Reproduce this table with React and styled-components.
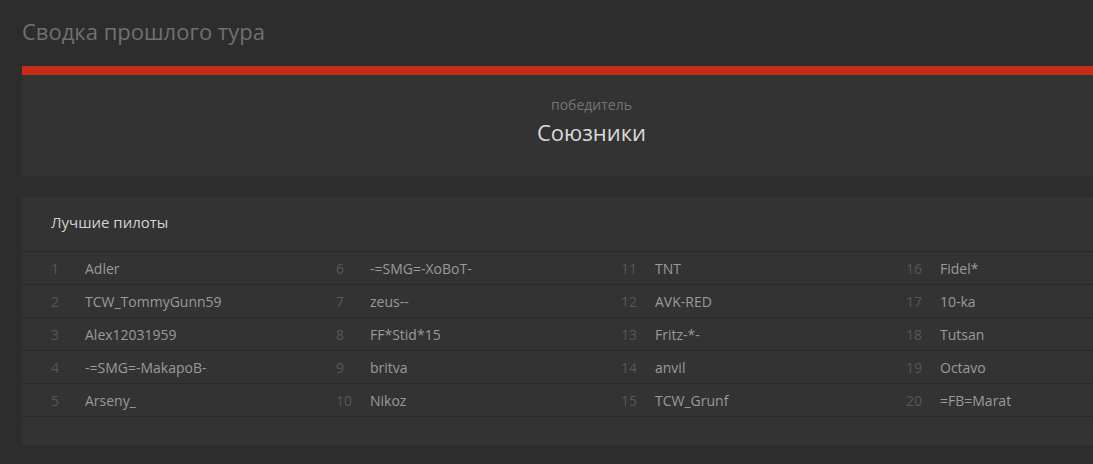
import React from 'react'
import styled, { createGlobalStyle } from 'styled-components'

const GlobalStyle = createGlobalStyle`
  html, body {
    margin: 0;
    padding: 0;
    background: #2d2d2d;
    overflow: hidden;
  }
  body {
    font-family: "Open Sans", "Noto Sans", sans-serif;
  }
`

const Page = styled.div`
  padding: 16px 0 0 22px;
  width: 1139px;
  min-height: 448px;
`

const PageTitle = styled.h1`
  margin: 0 0 20px;
  font-size: 22px;
  line-height: 30px;
  font-weight: 400;
  color: #707070;
`

const WinnerCard = styled.section`
  background: #333333;
  border-top: 9px solid #c52d1a;
  padding: 20px 0 29px;
  text-align: center;
`

const WinnerLabel = styled.div`
  font-size: 14px;
  line-height: 20px;
  color: #747474;
`

const WinnerName = styled.div`
  margin-top: 2px;
  font-size: 22px;
  line-height: 30px;
  color: #dadada;
`

const PilotsCard = styled.section`
  margin-top: 21px;
  background: #333333;
  padding-bottom: 28px;
`

const CardHeader = styled.h2`
  margin: 0;
  padding: 15px 29px 19px;
  font-size: 15px;
  line-height: 20px;
  font-weight: 400;
  color: #d2d2d2;
  border-bottom: 1px solid #2b2b2b;
`

const Row = styled.div`
  display: grid;
  grid-template-columns: repeat(4, 285px);
  padding-left: 29px;
  height: 32px;
  border-bottom: 1px solid #2b2b2b;
`

const Cell = styled.div`
  display: flex;
  padding-top: 1px;
  font-size: 14px;
  line-height: 32px;
`

const Place = styled.span`
  width: 34px;
  color: #575757;
`

const Name = styled.span`
  color: #9a9a9a;
  white-space: nowrap;
`

const pilots = [
  'Adler', 'TCW_TommyGunn59', 'Alex12031959', '-=SMG=-MakapoB-', 'Arseny_',
  '-=SMG=-XoBoT-', 'zeus--', 'FF*Stid*15', 'britva', 'Nikoz',
  'TNT', 'AVK-RED', 'Fritz-*-', 'anvil', 'TCW_Grunf',
  'Fidel*', '10-ka', 'Tutsan', 'Octavo', '=FB=Marat',
]

export default function App() {
  const rows = [0, 1, 2, 3, 4]
  return (
    <>
      <GlobalStyle />
      <Page>
        <PageTitle>Сводка прошлого тура</PageTitle>
        <WinnerCard>
          <WinnerLabel>победитель</WinnerLabel>
          <WinnerName>Союзники</WinnerName>
        </WinnerCard>
        <PilotsCard>
          <CardHeader>Лучшие пилоты</CardHeader>
          {rows.map((r) => (
            <Row key={r}>
              {[0, 1, 2, 3].map((c) => {
                const i = c * 5 + r
                return (
                  <Cell key={c}>
                    <Place>{i + 1}</Place>
                    <Name>{pilots[i]}</Name>
                  </Cell>
                )
              })}
            </Row>
          ))}
        </PilotsCard>
      </Page>
    </>
  )
}
